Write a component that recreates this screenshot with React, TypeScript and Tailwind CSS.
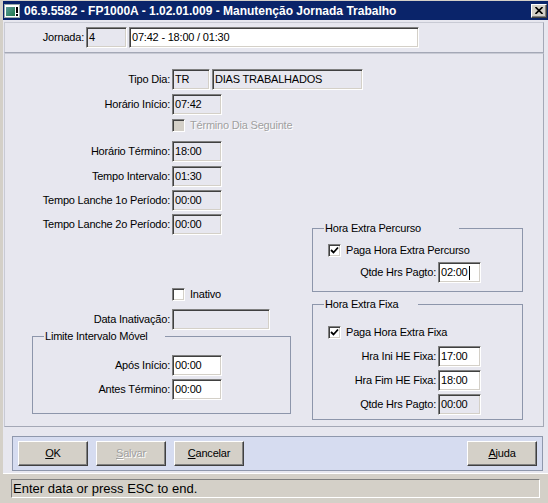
import React from "react";
import clsx from "clsx";

const sunken =
  "border border-t-[#808080] border-l-[#808080] border-r-white border-b-white shadow-[inset_1px_1px_0_#404040,inset_-1px_-1px_0_#d4d0c8]";
const raised =
  "border border-t-white border-l-white border-r-[#404040] border-b-[#404040] shadow-[inset_-1px_-1px_0_#808080]";

const Field = ({
  value,
  className,
  white,
  caret,
}: {
  value?: string;
  className: string;
  white?: boolean;
  caret?: boolean;
}) => (
  <div
    className={clsx(
      "flex h-[21px] shrink-0 items-center whitespace-nowrap pl-[2px] leading-none",
      sunken,
      white ? "bg-white" : "bg-[#e7e7ef]",
      className,
    )}
  >
    {value}
    {caret && <span className="ml-px h-[14px] w-px bg-black" />}
  </div>
);

const Check = ({ checked, disabled }: { checked?: boolean; disabled?: boolean }) => (
  <div
    className={clsx(
      "flex h-[13px] w-[13px] shrink-0 items-center justify-center",
      sunken,
      disabled ? "bg-[#d4d0c8]" : "bg-white",
    )}
  >
    {checked && (
      <svg width="9" height="9" viewBox="0 0 9 9">
        <path d="M1 4 L3.5 6.5 L8 1.5" stroke="#000" strokeWidth="1.8" fill="none" />
      </svg>
    )}
  </div>
);

const Row = ({
  label,
  labelW,
  children,
  className,
}: {
  label: string;
  labelW: string;
  children: React.ReactNode;
  className?: string;
}) => (
  <div className={clsx("flex h-[21px] items-center", className)}>
    <span className={clsx("shrink-0 whitespace-nowrap pr-[2px] text-right", labelW)}>{label}</span>
    {children}
  </div>
);

const Btn = ({ children, disabled }: { children: React.ReactNode; disabled?: boolean }) => (
  <div
    className={clsx(
      "flex h-[25px] w-[70px] items-center justify-center bg-[#d4d0c8]",
      raised,
      disabled && "text-[#a0a0a0] [text-shadow:1px_1px_0_#fff]",
    )}
  >
    {children}
  </div>
);

export default function App() {
  return (
    <div className="flex h-[503px] w-[548px] flex-col overflow-hidden bg-[#d4d0c8] font-['Liberation_Sans',Arial,sans-serif] text-[11px] tracking-[-0.2px] text-black">
      {/* title bar */}
      <div className="ml-[3px] mt-px flex h-[19px] shrink-0 items-center bg-[#0a246a] pl-[1px] pr-[1px]">
        <svg width="16" height="16" viewBox="0 0 16 16">
          <rect x="0.5" y="1.5" width="15" height="13" fill="#fff" stroke="#9aa" />
          <rect x="2" y="4" width="9" height="9" fill="url(#g)" />
          <rect x="12" y="4" width="2" height="6" fill="#000" />
          <rect x="12" y="11" width="2" height="2" fill="#000" />
          <defs>
            <linearGradient id="g" x1="0" y1="0" x2="1" y2="1">
              <stop offset="0" stopColor="#5a9a9a" />
              <stop offset="1" stopColor="#1f7a4a" />
            </linearGradient>
          </defs>
        </svg>
        <span className="ml-[4px] text-[12px] font-bold tracking-normal text-white">
          06.9.5582 - FP1000A - 1.02.01.009 - Manutenção Jornada Trabalho
        </span>
        <div className={clsx("ml-auto flex h-[14px] w-[16px] items-center justify-center bg-[#d4d0c8]", raised)}>
          <svg width="8" height="7" viewBox="0 0 8 7">
            <path d="M0.5 0 L7.5 7 M7.5 0 L0.5 7" stroke="#000" strokeWidth="1.6" />
          </svg>
        </div>
      </div>

      {/* body */}
      <div className="ml-[3px] flex flex-col bg-[#e7e7ef] pb-[2px] pl-px pr-[4px] pt-[2px]">
        {/* jornada */}
        <div className="flex h-[31px] items-center border border-[#a4a8b6] border-t-[#c8cad4] border-l-[#c8cad4]">
          <span className="w-[81px] pr-[2px] text-right">Jornada:</span>
          <Field value="4" className="w-[41px]" />
          <Field value="07:42 - 18:00 / 01:30" white className="ml-[2px] w-[290px]" />
        </div>

        {/* main panel */}
        <div className="flex h-[374px] border border-[#a4a8b6] border-t-[#c8cad4] border-l-[#c8cad4]">
          <div className="flex w-[307px] shrink-0 flex-col pt-[15px]">
            <Row label="Tipo Dia:" labelW="w-[167px]">
              <Field value="TR" className="w-[38px]" />
              <Field value="DIAS TRABALHADOS" className="ml-[2px] w-[151px]" />
            </Row>
            <Row label="Horário Início:" labelW="w-[167px]" className="mt-[4px]">
              <Field value="07:42" className="w-[50px]" />
            </Row>
            <div className="mt-[4px] flex h-[13px] items-center pl-[167px]">
              <Check disabled />
              <span className="ml-[5px] text-[#a0a0a0] [text-shadow:1px_1px_0_#fff]">Término Dia Seguinte</span>
            </div>
            <Row label="Horário Término:" labelW="w-[167px]" className="mt-[9px]">
              <Field value="18:00" className="w-[50px]" />
            </Row>
            <Row label="Tempo Intervalo:" labelW="w-[167px]" className="mt-[4px]">
              <Field value="01:30" className="w-[50px]" />
            </Row>
            <Row label="Tempo Lanche 1o Período:" labelW="w-[167px]" className="mt-[3px]">
              <Field value="00:00" className="w-[50px]" />
            </Row>
            <Row label="Tempo Lanche 2o Período:" labelW="w-[167px]" className="mt-[3px]">
              <Field value="00:00" className="w-[50px]" />
            </Row>
            <div className="mt-[53px] flex h-[13px] items-center pl-[167px]">
              <Check />
              <span className="ml-[5px]">Inativo</span>
            </div>
            <Row label="Data Inativação:" labelW="w-[167px]" className="mt-[8px]">
              <Field className="w-[98px]" />
            </Row>
            <fieldset className="ml-[27px] mt-0 h-[84px] w-[259px] border border-[#8d96ab]">
              <legend className="ml-[11px] w-[121px] pl-px leading-[13px]">Limite Intervalo Móvel</legend>
              <Row label="Após Início:" labelW="w-[139px]" className="mt-[12px]">
                <Field value="00:00" white className="w-[50px]" />
              </Row>
              <Row label="Antes Término:" labelW="w-[139px]" className="mt-[3px]">
                <Field value="00:00" white className="w-[50px]" />
              </Row>
            </fieldset>
          </div>

          <div className="flex w-[211px] shrink-0 flex-col pt-[168px]">
            <fieldset className="h-[70px] border border-[#8d96ab]">
              <legend className="ml-[11px] w-[135px] pl-px leading-[13px]">Hora Extra Percurso</legend>
              <div className="ml-[15px] mt-[9px] flex h-[13px] items-center">
                <Check checked />
                <span className="ml-[5px]">Paga Hora Extra Percurso</span>
              </div>
              <Row label="Qtde Hrs Pagto:" labelW="w-[125px]" className="mt-[5px]">
                <Field value="02:00" white caret className="w-[43px]" />
              </Row>
            </fieldset>
            <fieldset className="mt-[6px] h-[122px] border border-[#8d96ab]">
              <legend className="ml-[11px] w-[94px] pl-px leading-[13px]">Hora Extra Fixa</legend>
              <div className="ml-[15px] mt-[15px] flex h-[13px] items-center">
                <Check checked />
                <span className="ml-[5px]">Paga Hora Extra Fixa</span>
              </div>
              <Row label="Hra Ini HE Fixa:" labelW="w-[125px]" className="mt-[7px]">
                <Field value="17:00" white className="w-[43px]" />
              </Row>
              <Row label="Hra Fim HE Fixa:" labelW="w-[125px]" className="mt-[3px]">
                <Field value="18:00" white className="w-[43px]" />
              </Row>
              <Row label="Qtde Hrs Pagto:" labelW="w-[125px]" className="mt-[3px]">
                <Field value="00:00" className="w-[43px]" />
              </Row>
            </fieldset>
          </div>
        </div>

        {/* buttons */}
        <div className="ml-[8px] mr-px mt-[9px] flex h-[35px] items-center border border-[#8f98ad] bg-[#d6dcf0] px-[5px]">
          <div className="flex gap-[8px]">
            <Btn>
              <u>O</u>K
            </Btn>
            <Btn disabled>
              <u>S</u>alvar
            </Btn>
            <Btn>
              <u>C</u>ancelar
            </Btn>
          </div>
          <div className="ml-auto">
            <Btn>
              <u>A</u>juda
            </Btn>
          </div>
        </div>
      </div>

      {/* status bar */}
      <div className="ml-[3px] flex flex-1 border-t border-white px-[8px] pt-[5px]">
        <div className="flex h-[19px] w-[531px] items-center border border-t-[#808080] border-l-[#808080] border-r-white border-b-white pl-px text-[13px] tracking-normal">
          Enter data or press ESC to end.
        </div>
      </div>
    </div>
  );
}
